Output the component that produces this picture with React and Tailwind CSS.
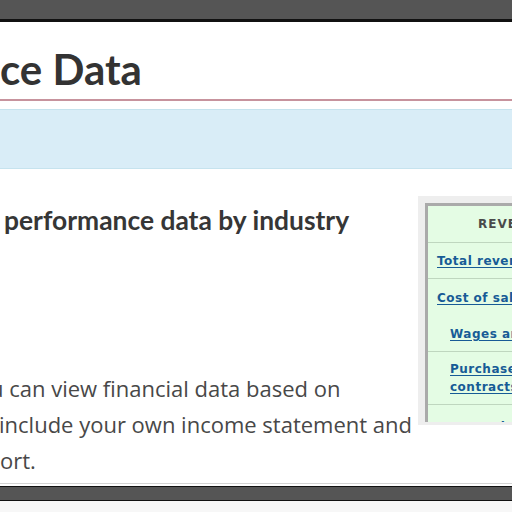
export default function App() {
  const link = "text-[#175b96] underline underline-offset-2 font-bold";
  return (
    <div className="w-[512px] h-[512px] overflow-hidden bg-white flex flex-col">
      <div className="h-[22px] shrink-0 bg-[#555555] border-b-[3px] border-[#111111]" />
      <div className="flex-1 min-h-0 overflow-hidden flex flex-col">
        <h1
          className="mt-[26px] pb-[9px] border-b-2 border-[#c7939d] text-[42px] leading-none font-bold text-[#333333] whitespace-nowrap"
          style={{ fontFamily: "Lato, 'Noto Sans', sans-serif" }}
        >
          ce Data
        </h1>
        <div className="mt-[8px] h-[60px] shrink-0 bg-[#d9edf7] border-y border-[#c6e3ee]" />
        <div className="flex flex-1 min-h-0">
          <div className="w-[418px] shrink-0 overflow-hidden">
            <h2
              className="mt-[38px] pl-[4px] text-[26.4px] leading-none font-bold text-[#363636] whitespace-nowrap"
              style={{ fontFamily: "Lato, 'Noto Sans', sans-serif" }}
            >
              performance data by industry
            </h2>
            <div
              className="mt-[137px] text-[22px] leading-[36px] text-[#484848] whitespace-nowrap"
              style={{ fontFamily: "'Open Sans', 'Noto Sans', sans-serif" }}
            >
              <div className="-ml-[10px]">u can view financial data based on</div>
              <div className="-ml-[1px]">include your own income statement and</div>
              <div>ort.</div>
            </div>
          </div>
          <div className="flex-1 min-w-0">
            <div className="mt-[27px] h-[229px] bg-[#eeeeee] pt-[7px] pl-[7px] pb-[3px] overflow-hidden">
              <div
                className="h-full overflow-hidden border-l-[3px] border-t-[3px] border-[#aaaaaa] bg-[#e4fce4] text-[12px] leading-[18px] tracking-[0.5px] whitespace-nowrap"
                style={{ fontFamily: "'DejaVu Sans', Verdana, sans-serif" }}
              >
                <div className="h-[37px] flex items-center pl-[50px] border-b border-[#bfd6bf] font-bold text-[#4a4a4a] tracking-[1px]">
                  REVENUE
                </div>
                <div className="h-[36px] flex items-center pl-[9px] border-b border-[#bfd6bf]">
                  <span className={link}>Total revenue</span>
                </div>
                <div className="h-[37px] flex items-center pl-[9px]">
                  <span className={link}>Cost of sales</span>
                </div>
                <div className="h-[36px] flex items-center pl-[22px] border-b border-[#bfd6bf]">
                  <span className={link}>Wages and</span>
                </div>
                <div className="h-[53px] flex flex-col justify-center pl-[22px] border-b border-[#bfd6bf]">
                  <span className={link}>Purchased</span>
                  <span className={link}>contracts</span>
                </div>
                <div className="h-[44px] flex items-center pl-[22px]">
                  <span className={link}>Depreciation</span>
                </div>
              </div>
            </div>
          </div>
        </div>
      </div>
      <div className="h-[29px] shrink-0 border-t border-[#d4d4d4] flex flex-col">
        <div className="h-[2px] bg-white" />
        <div className="h-[15px] bg-[#555555] border-y border-[#111111]" />
        <div className="flex-1 bg-[#f7f7f7]" />
      </div>
    </div>
  );
}
